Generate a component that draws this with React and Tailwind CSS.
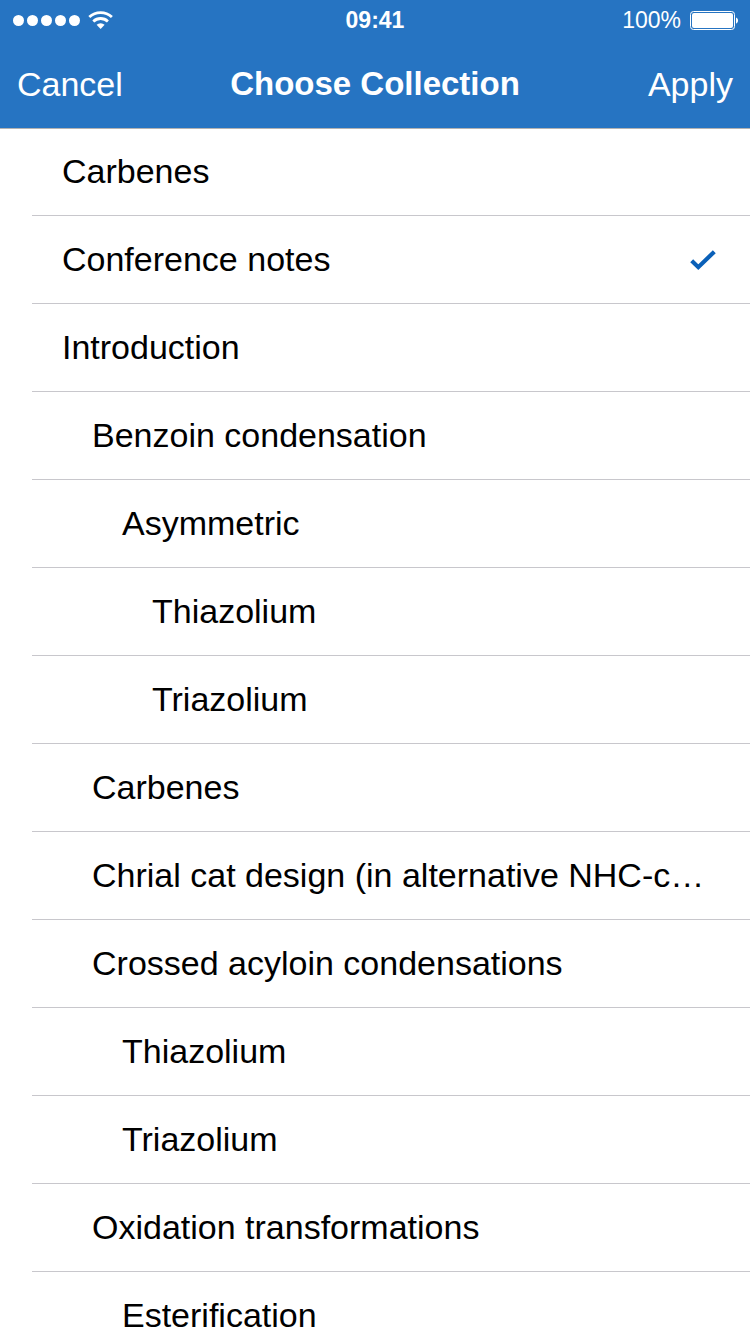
import { useState } from 'react';

const collections = [
  { id: 1, name: 'Carbenes', depth: 0 },
  { id: 2, name: 'Conference notes', depth: 0 },
  { id: 3, name: 'Introduction', depth: 0 },
  { id: 4, name: 'Benzoin condensation', depth: 1 },
  { id: 5, name: 'Asymmetric', depth: 2 },
  { id: 6, name: 'Thiazolium', depth: 3 },
  { id: 7, name: 'Triazolium', depth: 3 },
  { id: 8, name: 'Carbenes', depth: 1 },
  { id: 9, name: 'Chrial cat design (in alternative NHC-c…', depth: 1 },
  { id: 10, name: 'Crossed acyloin condensations', depth: 1 },
  { id: 11, name: 'Thiazolium', depth: 2 },
  { id: 12, name: 'Triazolium', depth: 2 },
  { id: 13, name: 'Oxidation transformations', depth: 1 },
  { id: 14, name: 'Esterification', depth: 2 },
];

const indent = ['pl-[30px]', 'pl-[60px]', 'pl-[90px]', 'pl-[120px]'];

function StatusBar() {
  return (
    <div className="grid h-10 grid-cols-[1fr_auto_1fr] items-center px-3 text-[23px]">
      <div className="flex items-center gap-2">
        <svg width="68" height="12" viewBox="0 0 68 12" fill="currentColor" aria-hidden="true">
          {[6.5, 20.5, 34.5, 48.5, 62.5].map((cx) => (
            <circle key={cx} cx={cx} cy="6.5" r="5.5" />
          ))}
        </svg>
        <svg width="26" height="18" viewBox="0 0 26 18" fill="none" stroke="currentColor" strokeWidth="2.8" aria-hidden="true">
          <path d="M1.3 6.1a16.5 16.5 0 0 1 22.6 0M5.3 10.4a10.7 10.7 0 0 1 14.6 0" />
          <path d="M12.6 18l-4-4.2a5.8 5.8 0 0 1 8 0z" fill="currentColor" stroke="none" />
        </svg>
      </div>
      <span className="text-center font-bold">09:41</span>
      <div className="flex items-center justify-end gap-2">
        <span>100%</span>
        <svg width="49" height="20" viewBox="0 0 49 20" aria-hidden="true">
          <rect x="1.5" y="1.5" width="44" height="18" rx="3" fill="none" stroke="currentColor" />
          <rect x="3" y="3" width="41" height="15" rx="2" fill="currentColor" />
          <path d="M47 7.5c2.7 1 2.7 5 0 6z" fill="currentColor" />
        </svg>
      </div>
    </div>
  );
}

function CollectionRow({ item, checked, onSelect }) {
  return (
    <li className="border-b border-[#c8c7cc]">
      <button
        type="button"
        aria-pressed={checked}
        onClick={() => onSelect(item.id)}
        className={`flex h-[87px] w-full items-center justify-between pr-8 text-left ${indent[item.depth]}`}
      >
        <span className="whitespace-nowrap">{item.name}</span>
        {checked && (
          <svg width="30" height="24" viewBox="0 0 30 24" fill="none" stroke="#0a60b8" strokeWidth="4.2" aria-hidden="true">
            <path d="M3.7 12.8l6.6 6.4L26.3 3.7" />
          </svg>
        )}
      </button>
    </li>
  );
}

function App() {
  const [selected, setSelected] = useState(2);

  return (
    <div className="h-screen overflow-hidden bg-white font-['Liberation_Sans',Arial,sans-serif] text-[34px] text-black">
      <header className="bg-[#2674c2] text-white shadow-[0_1px_0_#b2b2b2]">
        <StatusBar />
        <div className="grid h-22 grid-cols-[1fr_auto_1fr] items-center px-[17px]">
          <button type="button" className="justify-self-start">Cancel</button>
          <h1 className="text-[33px] font-bold">Choose Collection</h1>
          <button type="button" className="justify-self-end">Apply</button>
        </div>
      </header>
      <ul className="ml-8">
        {collections.map((item) => (
          <CollectionRow key={item.id} item={item} checked={item.id === selected} onSelect={setSelected} />
        ))}
      </ul>
    </div>
  );
}

export default App;
